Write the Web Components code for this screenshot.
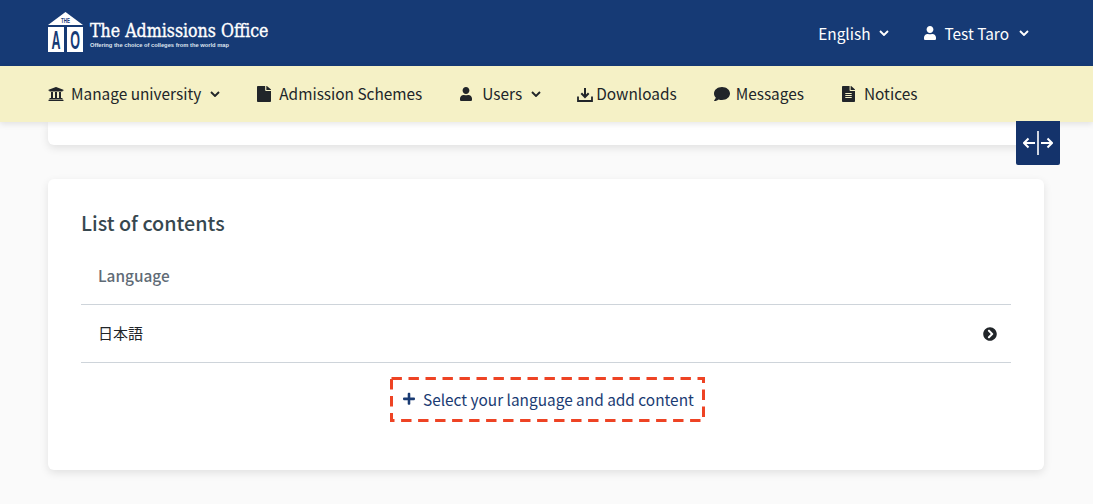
<!DOCTYPE html>
<html lang="en">
<head>
<meta charset="utf-8">
<title>The Admissions Office</title>
<style>
  html, body { margin: 0; background: #fafafa; }
  body { font-family: "Noto Sans CJK JP", "Noto Sans", sans-serif; font-size: 15.4px; color: #212529; height: 504px; overflow: hidden; }
</style>
</head>
<body>
<ao-header></ao-header>
<ao-nav>
  <ao-nav-item icon="university" caret style="--icon-w:16px;--icon-h:16px;--text-gap:7px">Manage university</ao-nav-item>
  <ao-nav-item icon="file" style="--icon-w:14px;--icon-h:16px;--text-gap:8px">Admission Schemes</ao-nav-item>
  <ao-nav-item icon="user" caret style="--icon-w:12px;--icon-h:14px;--text-gap:10px;margin-left:1px;margin-right:-1px">Users</ao-nav-item>
  <ao-nav-item icon="tray" style="--icon-w:16px;--icon-h:15px;--text-gap:3px">Downloads</ao-nav-item>
  <ao-nav-item icon="comment" style="--icon-w:16px;--icon-h:16px;--text-gap:6px">Messages</ao-nav-item>
  <ao-nav-item icon="notice" style="--icon-w:13px;--icon-h:16px;--text-gap:9px;margin-left:1px">Notices</ao-nav-item>
</ao-nav>
<ao-toggle></ao-toggle>
<ao-main>
  <ao-card clipped></ao-card>
  <ao-card>
    <ao-contents heading="List of contents" head="Language">
      <ao-row>日本語</ao-row>
    </ao-contents>
  </ao-card>
</ao-main>

<script>
// icon paths, most of them 512 high
const ICONS = {
  university: ['0 0 512 512', 'M496 128v16a8 8 0 0 1-8 8h-24v12c0 6.627-5.373 12-12 12H60c-6.627 0-12-5.373-12-12v-12H24a8 8 0 0 1-8-8v-16a8 8 0 0 1 4.941-7.392l232-88a7.996 7.996 0 0 1 6.118 0l232 88A8 8 0 0 1 496 128zm-24 304H40c-13.255 0-24 10.745-24 24v16a8 8 0 0 0 8 8h464a8 8 0 0 0 8-8v-16c0-13.255-10.745-24-24-24zM96 192v192H60c-6.627 0-12 5.373-12 12v20h416v-20c0-6.627-5.373-12-12-12h-36V192h-64v192h-64V192h-64v192h-64V192H96z'],
  file: ['0 0 384 512', 'M224 136V0H24C10.7 0 0 10.7 0 24v464c0 13.3 10.7 24 24 24h336c13.3 0 24-10.7 24-24V160H248c-13.2 0-24-10.8-24-24zm160-14.1v6.1H256V0h6.1c6.4 0 12.5 2.5 17 7l97.9 98c4.5 4.5 7 10.6 7 16.9z'],
  notice: ['0 0 384 512', 'M224 136V0H24C10.7 0 0 10.7 0 24v464c0 13.3 10.7 24 24 24h336c13.3 0 24-10.7 24-24V160H248c-13.2 0-24-10.8-24-24zm64 236c0 6.6-5.4 12-12 12H108c-6.6 0-12-5.4-12-12v-8c0-6.6 5.4-12 12-12h168c6.6 0 12 5.4 12 12v8zm0-64c0 6.6-5.4 12-12 12H108c-6.6 0-12-5.4-12-12v-8c0-6.6 5.4-12 12-12h168c6.6 0 12 5.4 12 12v8zm0-72v8c0 6.6-5.4 12-12 12H108c-6.6 0-12-5.4-12-12v-8c0-6.6 5.4-12 12-12h168c6.6 0 12 5.4 12 12zm96-114.1v6.1H256V0h6.1c6.4 0 12.5 2.5 17 7l97.9 98c4.5 4.5 7 10.6 7 16.9z'],
  user: ['0 0 448 512', 'M224 256c70.7 0 128-57.3 128-128S294.7 0 224 0 96 57.3 96 128s57.3 128 128 128zm89.6 32h-16.7c-22.2 10.2-46.9 16-72.9 16s-50.6-5.8-72.9-16h-16.7C60.2 288 0 348.2 0 422.4V464c0 26.5 21.5 48 48 48h352c26.5 0 48-21.5 48-48v-41.6c0-74.2-60.2-134.4-134.4-134.4z'],
  comment: ['0 0 512 512', 'M256 32C114.6 32 0 125.1 0 240c0 49.6 21.4 95 57 130.7C44.5 421.1 2.7 466 2.2 466.5c-2.2 2.3-2.8 5.7-1.5 8.7S4.8 480 8 480c66.3 0 116-31.8 140.6-51.4 32.7 12.3 69 19.4 107.4 19.4 141.4 0 256-93.1 256-208S397.4 32 256 32z'],
  plus: ['0 0 448 512', 'M416 208H272V64c0-17.67-14.33-32-32-32h-32c-17.67 0-32 14.33-32 32v144H32c-17.67 0-32 14.33-32 32v32c0 17.67 14.33 32 32 32h144v144c0 17.67 14.33 32 32 32h32c17.67 0 32-14.33 32-32V304h144c17.67 0 32-14.33 32-32v-32c0-17.67-14.33-32-32-32z'],
  circleRight: ['0 0 512 512', 'M256 8c137 0 248 111 248 248S393 504 256 504 8 393 8 256 119 8 256 8zm113.9 231L234.4 103.5c-9.4-9.4-24.6-9.4-33.9 0l-17 17c-9.4 9.4-9.4 24.6 0 33.9L285.1 256 183.5 357.6c-9.4 9.4-9.4 24.6 0 33.9l17 17c9.4 9.4 24.6 9.4 33.9 0L369.9 273c9.4-9.4 9.4-24.6 0-34z'],
};

function icon(name, w, h) {
  const [box, d] = ICONS[name];
  const height = h || w * box.split(' ')[3] / box.split(' ')[2];
  return `<svg width="${w}" height="${height}" viewBox="${box}" preserveAspectRatio="none" fill="currentColor" style="display:block;flex:none"><path d="${d}"/></svg>`;
}

const CARET = `<svg width="10" height="6" viewBox="0 0 10 6" fill="none" stroke="currentColor" stroke-width="1.9" style="display:block;flex:none"><path d="M1 1l4 4 4-4"/></svg>`;
const TRAY = `<svg width="16" height="15" viewBox="0 0 16 15" fill="none" stroke="currentColor" stroke-width="2" style="display:block"><path d="M1 9.5V14h14V9.5" stroke-width="1.8"/><path d="M8 1v8.5"/><path d="M4.3 6.2L8 10l3.7-3.8"/></svg>`;

class AoHeader extends HTMLElement {
  constructor() {
    super();
    this.attachShadow({ mode: 'open' });
    this.shadowRoot.innerHTML = `
    <style>
      :host { display: flex; align-items: center; height: 66px; padding: 0 64px 0 48px; background: #163a75; color: #fff; }
      .logo { display: flex; align-items: flex-start; gap: 7px; margin-right: auto; margin-top: -2px; }
      .mark { display: block; margin-bottom: -4px; }
      .mark text { font-family: "Liberation Sans", sans-serif; font-weight: 700; }
      .words { display: flex; flex-direction: column; padding-top: 10px; }
      .name { font: 400 17.6px/19px "DejaVu Serif Condensed", "DejaVu Serif", serif; -webkit-text-stroke: .35px #fff; white-space: nowrap; }
      .tag { font: 700 5.75px/8px "Liberation Sans", sans-serif; white-space: nowrap; color: #dfe5ef; }
      .menu { display: flex; align-items: center; gap: 8px; }
      .menu.lang { margin-right: 35px; }
      .label { line-height: 24px; margin-bottom: 1px; }
    </style>
    <div class="logo">
      <svg class="mark" width="35" height="44" viewBox="0 0 35 44">
        <path d="M17.5 0L35 13H0z" fill="#fff"/>
        <rect x="0" y="15" width="16" height="25" fill="#fff"/>
        <rect x="19" y="15" width="16" height="25" fill="#fff"/>
        <text transform="translate(17.5 11) scale(.55 1)" font-size="8" text-anchor="middle" fill="#163a75">THE</text>
        <text transform="translate(8 37) scale(.5 1)" font-size="25" text-anchor="middle" fill="#163a75">A</text>
        <text transform="translate(27 37) scale(.5 1)" font-size="25" text-anchor="middle" fill="#163a75">O</text>
      </svg>
      <div class="words">
        <div class="name">The Admissions Office</div>
        <div class="tag">Offering the choice of colleges from the world map</div>
      </div>
    </div>
    <div class="menu lang"><span class="label">English</span>${CARET}</div>
    <div class="menu">${icon('user', 12, 14)}<span class="label" style="margin-left:1px;margin-right:2px">Test Taro</span>${CARET}</div>`;
  }
}

class AoNav extends HTMLElement {
  constructor() {
    super();
    this.attachShadow({ mode: 'open' });
    this.shadowRoot.innerHTML = `
    <style>
      :host { display: flex; align-items: center; gap: 37px; height: 56px; padding-left: 48px; background: #f5f1c6; color: #212529; position: relative; z-index: 2; box-shadow: 0 2px 6px rgba(0,0,0,.1); }
    </style>
    <slot></slot>`;
  }
}

class AoNavItem extends HTMLElement {
  constructor() {
    super();
    this.attachShadow({ mode: 'open' });
    const name = this.getAttribute('icon');
    const w = parseInt(this.style.getPropertyValue('--icon-w'));
    const h = parseInt(this.style.getPropertyValue('--icon-h'));
    const glyph = name === 'tray' ? TRAY : icon(name, w, h);
    this.shadowRoot.innerHTML = `
    <style>
      :host { display: flex; align-items: center; line-height: 24px; white-space: nowrap; }
      .i { margin-right: var(--text-gap); }
      .t { margin-bottom: 2px; }
      .c { margin-left: 9px; }
    </style>
    <span class="i">${glyph}</span><span class="t"><slot></slot></span>${this.hasAttribute('caret') ? `<span class="c">${CARET}</span>` : ''}`;
  }
}

class AoToggle extends HTMLElement {
  constructor() {
    super();
    this.attachShadow({ mode: 'open' });
    this.shadowRoot.innerHTML = `
    <style>
      :host { position: absolute; left: 1016px; top: 121px; width: 44px; height: 44px; display: flex; align-items: center; justify-content: center; background: #14336b; border-radius: 0 0 2px 2px; color: #fff; z-index: 3; }
    </style>
    <svg width="30" height="26" viewBox="0 0 30 26" fill="none" stroke="#fff" stroke-width="2">
      <path d="M15 1v24" stroke-width="1.6"/>
      <path d="M1 13H12M5.5 8.5L1 13l4.5 4.5"/>
      <path d="M18 13h11M24.5 8.5L29 13l-4.5 4.5"/>
    </svg>`;
  }
}

class AoMain extends HTMLElement {
  constructor() {
    super();
    this.attachShadow({ mode: 'open' });
    this.shadowRoot.innerHTML = `
    <style>
      :host { display: flex; flex-direction: column; gap: 34px; padding: 0 49px 0 48px; }
    </style>
    <slot></slot>`;
  }
}

class AoCard extends HTMLElement {
  constructor() {
    super();
    this.attachShadow({ mode: 'open' });
    this.shadowRoot.innerHTML = `
    <style>
      :host { display: block; background: #fff; border-radius: 6px; box-shadow: 0 3px 8px rgba(0,0,0,.1); }
      :host([clipped]) { height: 23px; border-radius: 0 0 6px 6px; }
    </style>
    <slot></slot>`;
  }
}

class AoContents extends HTMLElement {
  constructor() {
    super();
    this.attachShadow({ mode: 'open' });
    this.shadowRoot.innerHTML = `
    <style>
      :host { display: block; padding: 29px 33px 32px; }
      h2 { margin: 0; font-size: 19.75px; line-height: 30px; font-weight: 500; color: #37474f; }
      .head { padding: 0 17px 2px; height: 57px; box-sizing: border-box; display: flex; align-items: center; border-bottom: 1px solid #ced4da; margin-top: 10px; font-weight: 500; color: #5f6b76; }
      .add { display: flex; justify-content: center; margin-top: 14px; padding-bottom: 16px; }
      a { position: relative; display: flex; align-items: center; width: 315px; height: 45px; margin-left: 3px; box-sizing: border-box; padding: 0 0 1px 13px; gap: 8px; color: #1a3b73; text-decoration: none; white-space: nowrap; }
      a svg.dash { position: absolute; inset: 0; width: 100%; height: 100%; overflow: visible; }
      rect { x: 1.5px; y: 1.5px; width: calc(100% - 3px); height: calc(100% - 3px); fill: none; stroke: #ee4324; stroke-width: 3; stroke-dasharray: 10.4 6.6; }
    </style>
    <h2>${this.getAttribute('heading')}</h2>
    <div class="head">${this.getAttribute('head')}</div>
    <slot></slot>
    <div class="add"><a href="#"><svg class="dash"><rect/></svg>${icon('plus', 12)}Select your language and add content</a></div>`;
  }
}

class AoRow extends HTMLElement {
  constructor() {
    super();
    this.attachShadow({ mode: 'open' });
    this.shadowRoot.innerHTML = `
    <style>
      :host { display: flex; align-items: center; justify-content: space-between; height: 58px; box-sizing: border-box; padding: 0 14px 0 17px; border-bottom: 1px solid #ced4da; font-size: 15px; color: #212529; }
      .t { margin-bottom: 2px; }
    </style>
    <span class="t"><slot></slot></span>${icon('circleRight', 14)}`;
  }
}

customElements.define('ao-header', AoHeader);
customElements.define('ao-nav', AoNav);
customElements.define('ao-nav-item', AoNavItem);
customElements.define('ao-toggle', AoToggle);
customElements.define('ao-main', AoMain);
customElements.define('ao-card', AoCard);
customElements.define('ao-contents', AoContents);
customElements.define('ao-row', AoRow);
</script>
</body>
</html>
